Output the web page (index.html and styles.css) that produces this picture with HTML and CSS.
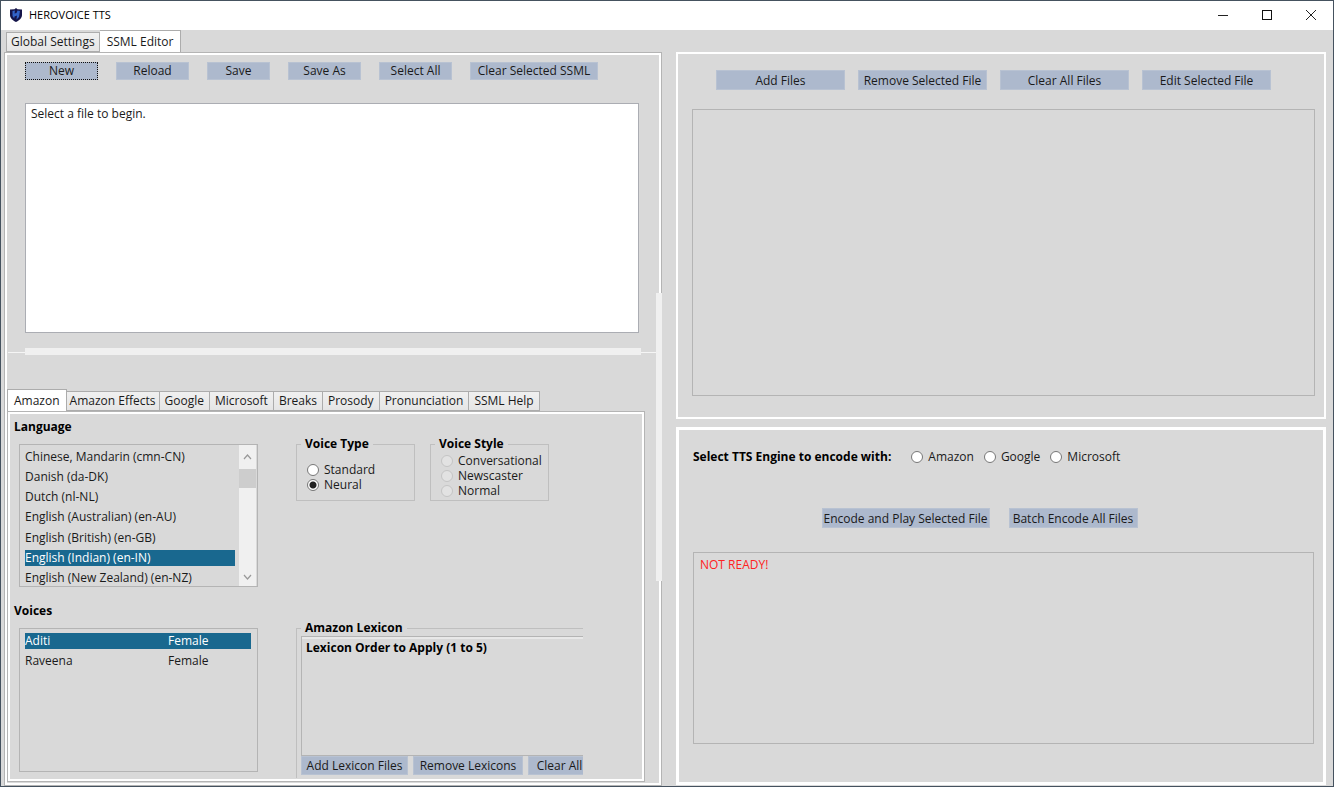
FILE: index.html
```html
<!DOCTYPE html>
<html lang="en">
<head>
    <meta charset="UTF-8">
    <meta name="viewport" content="width=device-width, initial-scale=1.0">
    <title>HEROVOICE TTS</title>
    <link rel="stylesheet" href="styles.css">
</head>
<body>
    <div class="window">
        <header class="titlebar">
            <svg class="logo" viewBox="0 0 12 14" width="12" height="14">
                <path d="M6 0 L7.5 1.3 L12 1.6 V7 C12 10.5 9 12.5 6 14 C3 12.5 0 10.5 0 7 V1.6 L4.5 1.3 Z" fill="#15154a"/>
                <path d="M2.500 3 L5 2.5 L4.5 5.5 L6.5 5 L7.5 2.5 L10 3 L9 9 L6.5 11.5 L7 7.5 L4.5 8.5 L4.200 10.5 L2.500 8 Z" fill="#3263c8"/>
            </svg>
            <span class="title">HEROVOICE TTS</span>
            <div class="window-buttons">
                <button aria-label="Minimize"><svg width="12" height="12" viewBox="0 0 12 12"><path d="M1 6.5H11" stroke="#222" fill="none"/></svg></button>
                <button aria-label="Maximize"><svg width="12" height="12" viewBox="0 0 12 12"><rect x="1.5" y="1.5" width="9" height="9" stroke="#111" fill="none"/></svg></button>
                <button aria-label="Close"><svg width="12" height="12" viewBox="0 0 12 12"><path d="M1 1L11 11M11 1L1 11" stroke="#222" fill="none"/></svg></button>
            </div>
        </header>

        <main class="main">
            <section class="left">
                <div class="tabs" role="tablist">
                    <button class="tab" role="tab">Global Settings</button>
                    <button class="tab active" role="tab">SSML Editor</button>
                </div>
                <div class="editor-panel">
                    <div class="toolbar">
                        <button class="btn focused">New</button>
                        <button class="btn">Reload</button>
                        <button class="btn small">Save</button>
                        <button class="btn">Save As</button>
                        <button class="btn">Select All</button>
                        <button class="btn wide">Clear Selected SSML</button>
                    </div>
                    <textarea class="ssml" aria-label="SSML text" spellcheck="false">Select a file to begin.</textarea>
                    <div class="h-splitter"><div class="grip"></div></div>

                    <div class="tabs inner-tabs" role="tablist">
                        <button class="tab active" role="tab">Amazon</button>
                        <button class="tab" role="tab">Amazon Effects</button>
                        <button class="tab" role="tab">Google</button>
                        <button class="tab" role="tab">Microsoft</button>
                        <button class="tab" role="tab">Breaks</button>
                        <button class="tab" role="tab">Prosody</button>
                        <button class="tab" role="tab">Pronunciation</button>
                        <button class="tab" role="tab">SSML Help</button>
                    </div>
                    <div class="amazon-panel">
                        <div class="voice-column">
                            <h2 id="language-title">Language</h2>
                            <div class="listbox">
                                <ul role="listbox" aria-labelledby="language-title">
                                    <li role="option">Chinese, Mandarin (cmn-CN)</li>
                                    <li role="option">Danish (da-DK)</li>
                                    <li role="option">Dutch (nl-NL)</li>
                                    <li role="option">English (Australian) (en-AU)</li>
                                    <li role="option">English (British) (en-GB)</li>
                                    <li role="option" class="selected" aria-selected="true">English (Indian) (en-IN)</li>
                                    <li role="option">English (New Zealand) (en-NZ)</li>
                                </ul>
                                <div class="scrollbar">
                                    <button aria-label="Scroll up"><svg width="9" height="6" viewBox="0 0 9 6"><path d="M1 5L4.500 1L8 5" stroke="#999" stroke-width="1.2" fill="none"/></svg></button>
                                    <div class="thumb"></div>
                                    <button class="down" aria-label="Scroll down"><svg width="9" height="6" viewBox="0 0 9 6"><path d="M1 1L4.500 5L8 1" stroke="#999" stroke-width="1.2" fill="none"/></svg></button>
                                </div>
                            </div>
                            <h2 class="voices-title" id="voices-title">Voices</h2>
                            <div class="voices">
                                <table aria-labelledby="voices-title">
                                    <tr class="selected"><td>Aditi</td><td>Female</td></tr>
                                    <tr><td>Raveena</td><td>Female</td></tr>
                                </table>
                            </div>
                        </div>
                        <div class="options-column">
                            <div class="groups">
                                <fieldset class="group voice-type">
                                    <legend>Voice Type</legend>
                                    <label><input type="radio" name="type">Standard</label>
                                    <label><input type="radio" name="type" checked>Neural</label>
                                </fieldset>
                                <fieldset class="group">
                                    <legend>Voice Style</legend>
                                    <label><input type="radio" name="style" disabled>Conversational</label>
                                    <label><input type="radio" name="style" disabled>Newscaster</label>
                                    <label><input type="radio" name="style" disabled>Normal</label>
                                </fieldset>
                            </div>
                            <div class="lexicon-clip">
                                <fieldset class="group lexicon">
                                    <legend>Amazon Lexicon</legend>
                                    <div class="lexicon-list"><h3>Lexicon Order to Apply (1 to 5)</h3></div>
                                    <div class="lexicon-buttons">
                                        <button class="btn">Add Lexicon Files</button>
                                        <button class="btn">Remove Lexicons</button>
                                        <button class="btn clear">Clear All</button>
                                    </div>
                                </fieldset>
                            </div>
                        </div>
                    </div>
                    <div class="v-splitter"></div>
                </div>
            </section>

            <section class="right">
                <div class="panel files">
                    <div class="file-buttons">
                        <button class="btn">Add Files</button>
                        <button class="btn">Remove Selected File</button>
                        <button class="btn">Clear All Files</button>
                        <button class="btn">Edit Selected File</button>
                    </div>
                    <div class="file-list"></div>
                </div>
                <div class="panel encode">
                    <div class="engine" role="radiogroup" aria-labelledby="engine-title">
                        <strong id="engine-title">Select TTS Engine to encode with:</strong>
                        <label><input type="radio" name="engine">Amazon</label>
                        <label><input type="radio" name="engine">Google</label>
                        <label><input type="radio" name="engine">Microsoft</label>
                    </div>
                    <div class="encode-buttons">
                        <button class="btn play">Encode and Play Selected File</button>
                        <button class="btn">Batch Encode All Files</button>
                    </div>
                    <div class="status">NOT READY!</div>
                </div>
            </section>
        </main>
    </div>
</body>
</html>
```
FILE: styles.css
```css
* {
    box-sizing: border-box;
}
body {
    margin: 0;
    font-family: "Open Sans", "Noto Sans", sans-serif;
    font-size: 12px;
    line-height: 16px;
    color: #1a1a1a;
    background-color: #d9d9d9;
}
button {
    font: inherit;
    color: inherit;
    padding: 0;
    border: none;
    background: none;
    white-space: nowrap;
}
h2, h3 {
    margin: 0;
    font-size: 12px;
    line-height: 16px;
    font-weight: bold;
    color: #000;
}
.window {
    display: flex;
    flex-direction: column;
    min-height: 100vh;
    border: 1px solid #45525f;
}

/* Title bar */
.titlebar {
    display: flex;
    align-items: center;
    height: 29px;
    padding: 0 0 2px 9px;
    background-color: #fff;
}
.title {
    margin-left: 7px;
    font-size: 11px;
    color: #000;
}
.window-buttons {
    display: flex;
    margin-left: auto;
}
.window-buttons button {
    display: flex;
    align-items: center;
    justify-content: center;
    width: 44px;
    height: 27px;
}

.main {
    flex: 1;
    display: grid;
    grid-template-columns: 658fr 650fr;
    gap: 14px;
    padding: 0 7px 0 3px;
}
.left {
    display: flex;
    flex-direction: column;
    min-width: 0;
}

/* Tabs */
.tabs {
    display: flex;
    align-items: flex-end;
    height: 22px;
    padding-left: 2px;
}
.tab {
    height: 20px;
    padding: 0 4px;
    border: 1px solid #acacac;
    border-left: none;
    background: linear-gradient(#f0f0f0, #e5e5e5);
}
.tab:first-child {
    border-left: 1px solid #acacac;
}
.tab.active {
    height: 22px;
    padding: 0 7px;
    background: #fff;
    border-bottom: none;
}

.editor-panel {
    position: relative;
    flex: 1;
    display: flex;
    flex-direction: column;
    border: 1px solid #b4b4b4;
    padding: 3px;
}
.amazon-panel, .editor-panel {
    outline: 2px solid #fff;
    outline-offset: -3px;
}
.btn {
    height: 18px;
    min-width: 73px;
    padding: 0 4px;
    background-color: #adb9cd;
    border: 1px solid #b8c2d2;
    line-height: 16px;
}
.toolbar {
    display: flex;
    gap: 18px;
    padding: 6px 17px 23px;
}
.btn.small {
    min-width: 63px;
}
.btn.wide {
    min-width: 128px;
}
.btn.focused {
    border: 1px dotted #111;
}
.ssml {
    height: 230px;
    margin: 0 19px 0 17px;
    padding: 2px 5px;
    border: 1px solid #abadb3;
    border-radius: 0;
    resize: none;
    font: inherit;
    color: inherit;
    background-color: #fff;
    outline: none;
}
.h-splitter {
    margin-top: 15px;
    padding: 0 17px;
    background: linear-gradient(#f5f5f5, #f5f5f5) 0 4px / 100% 1px no-repeat;
}
.grip {
    height: 7px;
    background-color: #f0f0f0;
}
.v-splitter {
    position: absolute;
    right: -1px;
    top: 240px;
    width: 6px;
    height: 288px;
    background-color: #f0f0f0;
}

/* Amazon tab */
.inner-tabs {
    margin: 34px 0 0 -1px;
    padding-left: 0;
}
.inner-tabs .tab {
    padding: 0 5px;
}
.inner-tabs .tab.active {
    padding: 0 6px;
}
.inner-tabs .active + .tab {
    padding: 0 3px;
}
.amazon-panel {
    flex: 1;
    display: flex;
    margin: 0 13px 0 -1px;
    padding: 4px 3px 3px 2px;
    border: 1px solid #b4b4b4;
}
.voice-column {
    display: flex;
    flex-direction: column;
    width: 248px;
    padding: 3px 0 6px 4px;
}
.options-column {
    flex: 1;
    display: flex;
    flex-direction: column;
    min-width: 0;
    padding: 19px 0 0 38px;
}
.listbox {
    display: flex;
    height: 143px;
    margin: 9px 0 0 5px;
    border: 1px solid #b4b4b4;
}
.listbox ul {
    flex: 1;
    display: flex;
    flex-direction: column;
    justify-content: space-between;
    margin: 0;
    padding: 4px 4px 0 5px;
    list-style: none;
    overflow: hidden;
}
.selected {
    background-color: #19688f;
    color: #fff;
}
.scrollbar {
    display: flex;
    flex-direction: column;
    width: 17px;
    margin-right: 1px;
    background-color: #f0f0f0;
}
.scrollbar button {
    height: 24px;
}
.scrollbar svg {
    display: block;
    margin: 0 auto;
}
.scrollbar .down {
    height: 18px;
    margin-top: auto;
}
.thumb {
    height: 19px;
    background-color: #cdcdcd;
}
.voices-title {
    margin-top: 16px;
}
.voices {
    flex: 1;
    margin: 9px 0 0 5px;
    padding: 0 6px 0 5px;
    border: 1px solid #b4b4b4;
}
.voices table {
    width: 100%;
    border-collapse: separate;
    border-spacing: 0 4px;
}
.voices td {
    padding: 0;
    line-height: 16px;
}
.voices td:last-child {
    width: 83px;
}
.groups {
    display: flex;
    gap: 15px;
}
.group {
    width: 119px;
    height: 66px;
    margin: 0;
    padding: 0 0 0 10px;
    border: 1px solid #bfbfbf;
}
.group legend {
    margin-left: -6px;
    padding: 0 4px;
    line-height: 18px;
    font-weight: bold;
    color: #000;
}
.group label {
    display: flex;
    align-items: center;
    height: 15px;
}
.voice-type label:first-of-type {
    margin-top: 9px;
}
input[type="radio"] {
    appearance: none;
    flex: none;
    width: 12px;
    height: 12px;
    margin: 0 5px 0 0;
    border: 1px solid #777;
    border-radius: 50%;
    background-color: #fff;
}
input[type="radio"]:checked {
    background: radial-gradient(circle, #222 3px, #fff 4px);
}
input[type="radio"]:disabled {
    border-color: #c4c4c4;
    background-color: #e2e2e2;
}
/* the lexicon group runs past the visible area */
.lexicon-clip {
    width: 287px;
    margin-top: auto;
    overflow: hidden;
}
.lexicon {
    width: 340px;
    height: 159px;
    padding: 0 0 0 4px;
    border-bottom: none;
}
.lexicon legend {
    margin-left: 0;
}
.lexicon-list {
    height: 120px;
    margin-top: -1px;
    padding: 3px 4px;
    border: 1px solid #b4b4b4;
    box-shadow: inset 0 2px 0 #e8e8e8;
}
.lexicon-buttons {
    display: flex;
    gap: 5px;
}
.lexicon-buttons .btn {
    height: 19px;
    min-width: 107px;
}
.lexicon-buttons .btn:nth-child(2) {
    min-width: 110px;
}
.lexicon-buttons .clear {
    min-width: 63px;
}

/* Right side */
.right {
    display: grid;
    grid-template-rows: 367fr 358fr;
    gap: 8px;
    min-width: 0;
    padding: 22px 0 1px;
}
.panel {
    display: flex;
    flex-direction: column;
    padding: 16px 9px 21px 14px;
    border: 2px solid #fff;
}
.encode {
    padding: 15px 9px 38px 14px;
    border-width: 3px;
}
.file-buttons, .encode-buttons {
    display: flex;
    justify-content: center;
    gap: 13px;
    margin-right: 20px;
}
.file-buttons .btn, .encode-buttons .btn {
    height: 20px;
    width: 129px;
    padding: 1px 0 0;
}
.file-list {
    flex: 1;
    margin-top: 19px;
    border: 1px solid #b4b4b4;
}
.engine {
    display: flex;
    align-items: center;
    height: 24px;
}
.engine strong {
    margin-right: 20px;
    color: #000;
}
.engine label {
    display: flex;
    align-items: center;
    margin-right: 10px;
}
.encode-buttons {
    gap: 19px;
    margin: 39px 48px 0 0;
}
.encode-buttons .play {
    width: 168px;
}
.status {
    flex: 1;
    margin-top: 24px;
    padding: 4px 6px;
    border: 1px solid #b4b4b4;
    color: #f22;
}
```
